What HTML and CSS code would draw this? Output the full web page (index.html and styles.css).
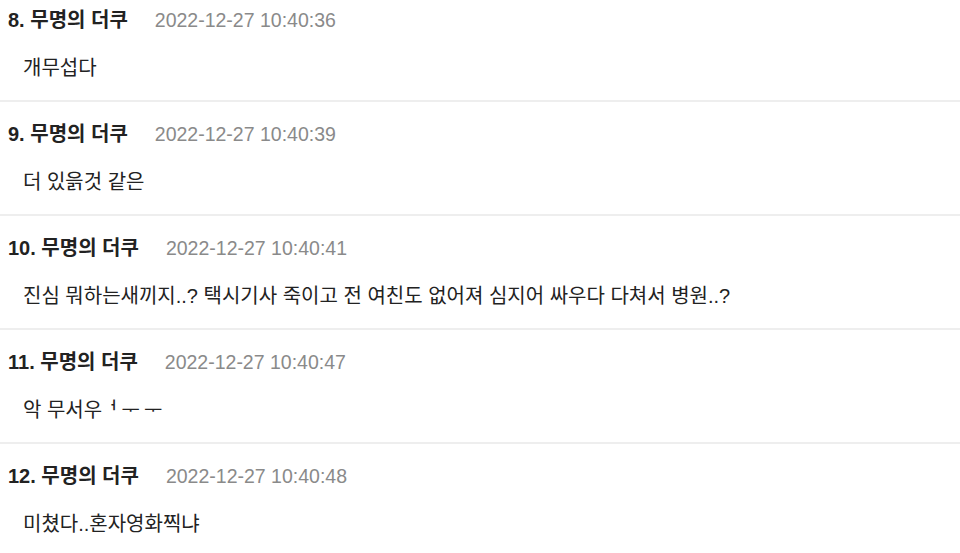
FILE: index.html
```html
<!DOCTYPE html>
<html lang="ko">
<head>
<meta charset="utf-8">
<link rel="stylesheet" href="styles.css">
</head>
<body>
<ul class="comments">
  <li class="comment">
    <div class="meta"><span class="name">8. 무명의 더쿠</span><span class="date">2022-12-27 10:40:36</span></div>
    <p class="text">개무섭다</p>
  </li>
  <li class="comment">
    <div class="meta"><span class="name">9. 무명의 더쿠</span><span class="date">2022-12-27 10:40:39</span></div>
    <p class="text">더 있읅것 같은</p>
  </li>
  <li class="comment">
    <div class="meta"><span class="name">10. 무명의 더쿠</span><span class="date">2022-12-27 10:40:41</span></div>
    <p class="text">진심 뭐하는새끼지..? 택시기사 죽이고 전 여친도 없어져 심지어 싸우다 다쳐서 병원..?</p>
  </li>
  <li class="comment">
    <div class="meta"><span class="name">11. 무명의 더쿠</span><span class="date">2022-12-27 10:40:47</span></div>
    <p class="text">악 무서우<span class="jamo">ᅥᅮᅮ</span></p>
  </li>
  <li class="comment">
    <div class="meta"><span class="name">12. 무명의 더쿠</span><span class="date">2022-12-27 10:40:48</span></div>
    <p class="text">미쳤다..혼자영화찍냐</p>
  </li>
</ul>
</body>
</html>
```
FILE: styles.css
```css
html, body {
  margin: 0;
  padding: 0;
  background: #fff;
}
body {
  font-family: "Liberation Sans", "Noto Sans CJK KR", sans-serif;
  color: #222;
}
.comments {
  list-style: none;
  margin: 0;
  padding: 0;
}
.comment {
  padding: 20px 8px 18px;
  border-bottom: 2px solid #eeeeee;
}
.comment:first-child {
  padding-top: 8px;
}
.meta {
  display: flex;
  align-items: center;
  gap: 27px;
  height: 24px;
  line-height: 24px;
}
.name {
  font-size: 20px;
  font-weight: 700;
  color: #222;
}
.date {
  font-size: 19.5px;
  color: #8a8a8a;
}
.text {
  margin: 22px 0 0 15px;
  font-size: 20px;
  line-height: 28px;
  color: #222;
}
.jamo {
  margin-left: -3px;
  letter-spacing: 4px;
}
```
